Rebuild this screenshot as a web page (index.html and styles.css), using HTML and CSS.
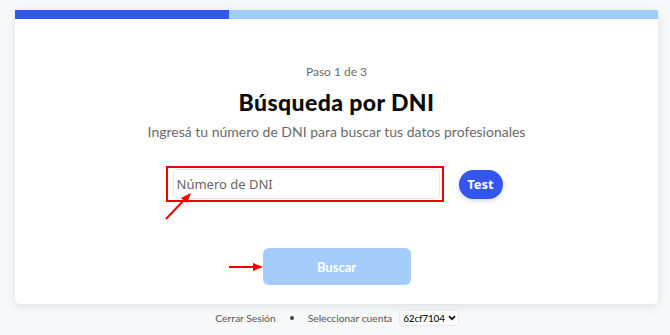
FILE: index.html
```html
<!DOCTYPE html>
<html lang="es">
<head>
<meta charset="utf-8">
<title>Búsqueda por DNI</title>
<link rel="stylesheet" href="styles.css">
</head>
<body>
<div class="page">
  <div class="card">
    <div class="progress">
      <div class="progress-done"></div>
      <div class="progress-rest"></div>
    </div>
    <div class="content">
      <div class="step">Paso 1 de 3</div>
      <h1 class="title">Búsqueda por DNI</h1>
      <p class="subtitle">Ingresá tu número de DNI para buscar tus datos profesionales</p>
      <div class="input-row">
        <div class="highlight">
          <input class="dni-input" type="text" placeholder="Número de DNI">
        </div>
        <button class="test-btn">Test</button>
      </div>
      <button class="search-btn">Buscar</button>
    </div>
  </div>
  <div class="footer">
    <span class="footer-link">Cerrar Sesión</span>
    <span class="footer-dot"></span>
    <span class="footer-link">Seleccionar cuenta</span>
    <span class="account-select">62cf7104
      <svg class="chev" width="8" height="6" viewBox="0 0 8 6"><path d="M1 1.2 L4 4.2 L7 1.2" fill="none" stroke="#111" stroke-width="1.8"/></svg>
    </span>
  </div>
</div>
<svg class="annotations" width="670" height="335" viewBox="0 0 670 335">
  <g stroke="#ee0000" stroke-width="2" fill="#ee0000">
    <line x1="166" y1="219" x2="186" y2="198"/>
    <polygon points="191,193 181,198 187,203" stroke="none"/>
    <line x1="229" y1="267" x2="255" y2="267"/>
    <polygon points="263,267 253,263 253,271" stroke="none"/>
  </g>
</svg>
</body>
</html>
```

FILE: styles.css
```css
* { box-sizing: border-box; }
html, body {
  margin: 0;
  padding: 0;
  background: #f7f8fa;
  font-family: "Lato", "Open Sans", sans-serif;
}
.page {
  padding: 10px 12px 0 15px;
}
.card {
  background: #fff;
  border-radius: 0 0 5px 5px;
  box-shadow: 0 2px 10px rgba(0, 0, 0, 0.10);
  overflow: hidden;
}
.progress {
  display: flex;
  height: 9px;
}
.progress-done {
  width: 33.3%;
  background: #3355f0;
}
.progress-rest {
  flex: 1;
  background: #a0cdfb;
}
.content {
  display: flex;
  flex-direction: column;
  align-items: center;
  padding: 45px 0 19px;
}
.step {
  font-size: 12px;
  line-height: 16px;
  color: #6b6b6b;
}
.title {
  margin: 8px 0 0;
  font-size: 23px;
  line-height: 28px;
  font-weight: 900;
  color: #0a0a0a;
  letter-spacing: 0.4px;
}
.subtitle {
  margin: 6px 0 0;
  font-size: 14px;
  line-height: 20px;
  color: #6a6a6a;
}
.input-row {
  display: flex;
  align-items: center;
  gap: 15px;
  margin-top: 24px;
  margin-left: -5px;
}
.highlight {
  width: 278px;
  height: 36px;
  border: 2px solid #ee0000;
  padding: 1px 2px 1px 5px;
}
.dni-input {
  width: 100%;
  height: 100%;
  border: 1px solid #e3e7f3;
  border-radius: 4px;
  padding: 0 3px;
  font-family: "Noto Sans", "Open Sans", sans-serif;
  font-size: 13px;
  color: #333;
  outline: none;
  background: #fff;
}
.dni-input::placeholder {
  color: #666;
}
.test-btn {
  width: 44px;
  height: 29px;
  border: none;
  border-radius: 15px;
  background: #3355f0;
  color: #fff;
  font-family: "Noto Sans", "Open Sans", sans-serif;
  font-weight: 700;
  font-size: 13px;
  padding: 0;
  box-shadow: 0 2px 4px rgba(0, 0, 0, 0.15);
}
.search-btn {
  margin-top: 46px;
  width: 148px;
  height: 37px;
  border: none;
  border-radius: 6px;
  background: #a5cdfb;
  color: #fff;
  font-family: "Lato", sans-serif;
  font-weight: 700;
  font-size: 13px;
  padding: 0;
}
.footer {
  display: flex;
  align-items: center;
  justify-content: center;
  padding-top: 6px;
  padding-left: 1px;
  font-size: 10.3px;
  color: #555;
}
.footer-link {
  line-height: 16px;
}
.footer-dot {
  width: 4px;
  height: 4px;
  border-radius: 50%;
  background: #444;
  margin: 0 14px 0 14px;
}
.account-select {
  display: inline-flex;
  align-items: center;
  gap: 3px;
  margin-left: 7px;
  height: 16px;
  padding: 0 2px 0 3px;
  border: 1px solid #e6e8ef;
  border-radius: 3px;
  background: #fff;
  color: #111;
  font-size: 10px;
  font-weight: 500;
  letter-spacing: -0.2px;
}
.annotations {
  position: absolute;
  left: 0;
  top: 0;
  pointer-events: none;
}
```
